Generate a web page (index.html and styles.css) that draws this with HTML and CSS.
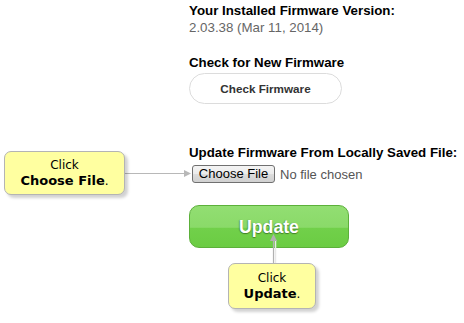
FILE: index.html
```html
<!DOCTYPE html>
<html lang="en">
<head>
  <meta charset="UTF-8" />
  <title>Firmware Update</title>
  <link rel="stylesheet" href="styles.css">
</head>
<body>
  <div class="panel">
    <div class="label">Your Installed Firmware Version:</div>
    <div class="version">2.03.38 (Mar 11, 2014)</div>

    <div class="label section">Check for New Firmware</div>
    <button class="check-btn">Check Firmware</button>

    <div class="label upload">Update Firmware From Locally Saved File:</div>
    <div class="file-row">
      <button class="file-btn">Choose File</button>
      <span class="file-name">No file chosen</span>
    </div>

    <button class="update-btn">Update</button>
  </div>

  <!-- annotation callouts -->
  <svg class="connectors" width="464" height="323" viewBox="0 0 464 323">
    <line x1="124" y1="173.5" x2="186" y2="173.5" stroke="#b8b8b8" stroke-width="1.2"/>
    <polygon points="191,173.5 184,170 184,177" fill="#b8b8b8"/>
    <line x1="275.5" y1="240" x2="275.5" y2="263" stroke="#e8e8e8" stroke-width="1.5"/>
    <line x1="273.5" y1="238" x2="273.5" y2="263" stroke="#b0b0b0" stroke-width="1.2"/>
    <polygon points="273.5,234 270,241 277,241" fill="#b0b0b0"/>
  </svg>

  <div class="callout callout-file">
    <span>Click</span>
    <span><b>Choose File</b>.</span>
  </div>

  <div class="callout callout-update">
    <span>Click</span>
    <span><b>Update</b>.</span>
  </div>
</body>
</html>
```

FILE: styles.css
```css
* {
  box-sizing: border-box;
}

html, body {
  margin: 0;
  padding: 0;
  background: #fff;
}

body {
  position: relative;
  width: 464px;
  height: 323px;
  overflow: hidden;
  font-family: "Liberation Sans", Arial, sans-serif;
  font-size: 13.3px;
  color: #000;
}

.panel {
  display: flex;
  flex-direction: column;
  align-items: flex-start;
  padding: 2px 0 0 189px;
}

.label {
  font-weight: bold;
  line-height: 17px;
  white-space: nowrap;
}

.version {
  line-height: 17px;
  color: #666;
}

.section {
  margin-top: 18px;
}

.check-btn {
  margin-top: 2px;
  width: 153px;
  height: 31px;
  border: 1px solid #dcdcdc;
  border-radius: 16px;
  background: #fff;
  font-family: "Liberation Sans", Arial, sans-serif;
  font-size: 11.7px;
  font-weight: bold;
  color: #333;
  padding: 0;
}

.upload {
  margin-top: 40px;
}

.file-row {
  display: flex;
  align-items: center;
  gap: 5px;
  margin-top: 4px;
  margin-left: 3px;
}

.file-btn {
  width: 83px;
  height: 18px;
  padding: 0;
  border: 1px solid #707070;
  border-radius: 3px;
  background: linear-gradient(#f4f4f4 0%, #ebebeb 50%, #dddddd 50%, #d0d0d0 100%);
  font-family: "Liberation Sans", Arial, sans-serif;
  font-size: 13px;
  color: #000;
  line-height: 16px;
}

.file-name {
  font-size: 13px;
  color: #555;
}

.update-btn {
  margin-top: 22px;
  width: 160px;
  height: 43px;
  padding: 2px 0 0;
  border: 1px solid #5cb03a;
  border-radius: 10px;
  background: linear-gradient(#92de72 0%, #8ada69 52%, #71d04a 54%, #6bcc43 100%);
  font-family: "Liberation Sans", Arial, sans-serif;
  font-size: 17.7px;
  font-weight: bold;
  color: #fff;
  text-shadow: 0 1px 1px rgba(40, 80, 20, 0.6), -1px 0 1px rgba(40, 80, 20, 0.3);
}

.connectors {
  position: absolute;
  top: 0;
  left: 0;
  pointer-events: none;
}

.callout {
  position: absolute;
  display: flex;
  flex-direction: column;
  align-items: center;
  justify-content: center;
  background: #ffffa0;
  border: 1px solid #b4b4b4;
  border-radius: 7px;
  box-shadow: 3px 3px 3px rgba(0, 0, 0, 0.18);
  font-family: "DejaVu Sans", Verdana, sans-serif;
  font-size: 12px;
  line-height: 15px;
  color: #000;
}

.callout b {
  font-size: 13px;
}

.callout-file {
  left: 4px;
  top: 151px;
  width: 121px;
  height: 44px;
}

.callout-update {
  left: 228px;
  top: 263px;
  width: 88px;
  height: 46px;
}
```
